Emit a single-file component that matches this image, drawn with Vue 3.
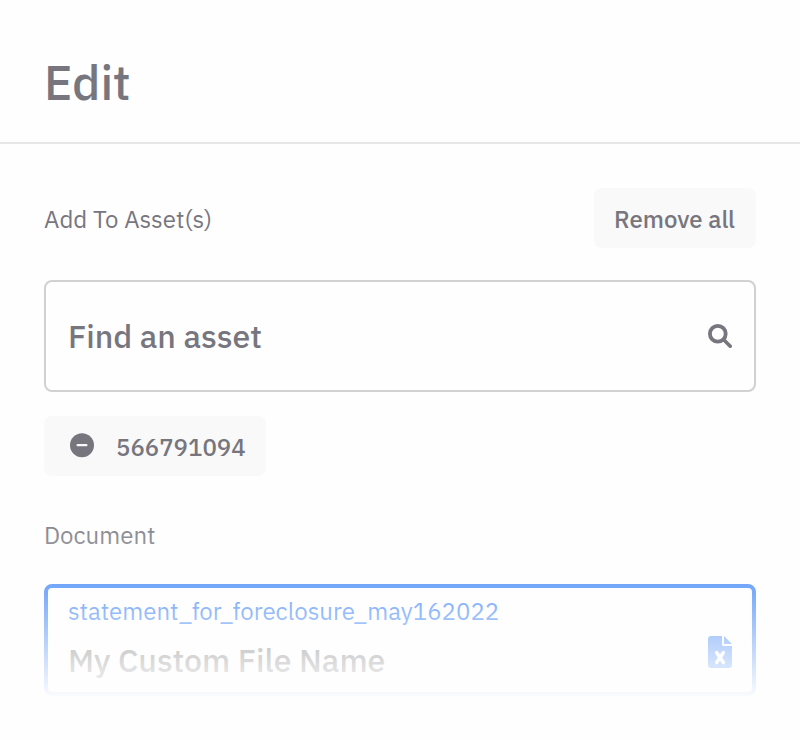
<template>
  <main class="edit-panel">
    <header class="panel-header">
      <h1><span class="t title">Edit</span></h1>
    </header>

    <div class="panel-body">
      <div class="label-row">
        <span class="t label-assets">Add To Asset(s)</span>
        <button type="button" class="chip remove-all" @click="removeAll">
          <span class="t">Remove all</span>
        </button>
      </div>

      <div class="search-box">
        <span class="t search-text">Find an asset</span>
        <svg class="search-icon" viewBox="0 0 24 24" fill="none" stroke="currentColor">
          <circle cx="9.8" cy="9.8" r="7.9" stroke-width="3.8" />
          <path d="M16 16l6.2 6.2" stroke-width="3.6" stroke-linecap="round" />
        </svg>
      </div>

      <div class="asset-list">
        <button
          v-for="asset in assets"
          :key="asset"
          type="button"
          class="chip asset"
          @click="removeAsset(asset)"
        >
          <svg class="minus-icon" viewBox="0 0 24 24">
            <circle cx="12" cy="12.2" r="12" fill="currentColor" />
            <path d="M7.6 12.2h8.8" stroke="#f9f9f9" stroke-width="2.2" stroke-linecap="round" />
          </svg>
          <span class="t asset-id">{{ asset }}</span>
        </button>
      </div>

      <div class="document-label"><span class="t">Document</span></div>

      <div class="document-card">
        <div class="document-info">
          <span class="t file-name">statement_for_foreclosure_may162022</span>
          <span class="t custom-name">My Custom File Name</span>
        </div>
        <svg class="file-icon" viewBox="0 0 24 32" fill="currentColor">
          <path d="M3 0H14V8.5Q14 10 15.5 10H24V29a3 3 0 0 1-3 3H3a3 3 0 0 1-3-3V3a3 3 0 0 1 3-3z" />
          <path d="M16 0l8 8h-8z" />
          <path d="M8.6 16.6L15.4 26.6M15.4 16.6L8.6 26.6" stroke="#fefefe" stroke-width="3.5" stroke-linecap="round" />
        </svg>
      </div>
    </div>

    <div class="fade"></div>
  </main>
</template>

<script setup>
import { ref } from 'vue'

const assets = ref(['566791094'])

function removeAsset(id) {
  assets.value = assets.value.filter((asset) => asset !== id)
}

function removeAll() {
  assets.value = []
}
</script>

<style>
body {
  margin: 0;
  background: #fefefe;
}
</style>

<style scoped>
.edit-panel {
  position: relative;
  box-sizing: border-box;
  height: 740px;
  overflow: hidden;
  background: #fefefe;
  color: #77767e;
  font-family: "IBM Plex Sans", Roboto, "Liberation Sans", sans-serif;
}

.t {
  display: block;
  white-space: nowrap;
}

.panel-header {
  box-sizing: border-box;
  height: 144px;
  padding: 50px 44px 0;
  border-bottom: 2px solid #e6e6e7;
}

.panel-header h1 {
  margin: 0;
  font-size: 48px;
  font-weight: 500;
  line-height: 64px;
}

.panel-body { padding: 44px 44px 0; }

.label-row {
  display: flex;
  align-items: center;
  justify-content: space-between;
  height: 60px;
}

.label-assets {
  padding-top: 1px;
  font-size: 24px;
}

.chip {
  display: flex;
  align-items: center;
  box-sizing: border-box;
  height: 60px;
  border: 0;
  border-radius: 8px;
  background: #f9f9f9;
  color: inherit;
  font: inherit;
  font-size: 24px;
  font-weight: 500;
  cursor: pointer;
}

.remove-all {
  justify-content: center;
  width: 162px;
  padding: 1px 1px 0 0;
}

.search-box {
  display: flex;
  align-items: center;
  justify-content: space-between;
  box-sizing: border-box;
  height: 112px;
  margin-top: 32px;
  padding: 0 22px;
  border: 2px solid #d1d1d2;
  border-radius: 8px;
}

.search-text {
  font-size: 32px;
  font-weight: 500;
}

.search-icon {
  width: 24px;
  height: 24px;
}

.asset-list {
  display: flex;
  margin-top: 24px;
}

.asset {
  gap: 22px;
  width: 222px;
  padding: 0 0 0 26px;
}

.minus-icon {
  width: 24px;
  height: 24px;
  margin-bottom: 2px;
  overflow: visible;
}

.asset-id { padding-top: 1px; }

.document-label {
  margin-top: 43px;
  font-size: 24px;
  line-height: 32px;
}

.document-card {
  display: flex;
  align-items: center;
  justify-content: space-between;
  box-sizing: border-box;
  height: 112px;
  margin-top: 33px;
  padding: 0 20px;
  border: 4px solid #0b66f6;
  border-radius: 8px;
  color: #0b66f6;
}

.document-info { height: 104px; }

.file-name {
  padding-top: 7px;
  font-size: 24px;
  line-height: 32px;
}

.custom-name {
  padding-top: 13px;
  color: #424242;
  font-size: 32px;
  font-weight: 500;
  line-height: 40px;
}

.file-icon {
  width: 24px;
  height: 32px;
  margin-top: 24px;
}

.fade {
  position: absolute;
  right: 0;
  bottom: 0;
  left: 0;
  height: 240px;
  background: linear-gradient(rgba(254, 254, 254, 0), #fefefe 200px);
  pointer-events: none;
}
</style>
